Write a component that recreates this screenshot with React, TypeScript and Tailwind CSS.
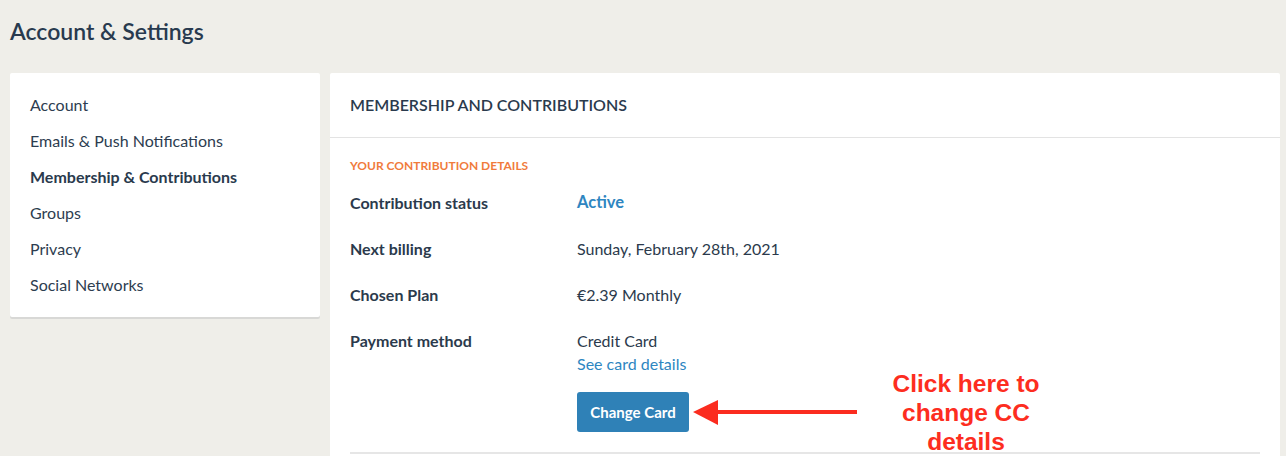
import React from "react";

const navItems = [
  { label: "Account", active: false },
  { label: "Emails & Push Notifications", active: false },
  { label: "Membership & Contributions", active: true },
  { label: "Groups", active: false },
  { label: "Privacy", active: false },
  { label: "Social Networks", active: false },
];

export default function App() {
  return (
    <div
      className="relative h-[456px] w-[1286px] overflow-hidden bg-[#efeee9] px-[10px] text-[#2b3a4c]"
      style={{ fontFamily: "Lato, 'Open Sans', sans-serif" }}
    >
      <div className="h-[73px] pt-[17px]">
        <h1 className="text-[23px] font-semibold leading-[28px] text-[#283a4f]">Account &amp; Settings</h1>
      </div>
      <div className="flex items-start gap-[10px]">
        <aside className="w-[310px] shrink-0 rounded-[2px] bg-white py-[14px] shadow-[0_2px_0_#d8d8d6]">
          {navItems.map((item) => (
            <div
              key={item.label}
              className={`h-[36px] px-[20px] text-[16px] leading-[36px] ${item.active ? "font-bold text-[#2a3a4d]" : "text-[#2d3d50]"}`}
            >
              {item.label}
            </div>
          ))}
        </aside>
        <main className="h-[400px] w-[950px] shrink-0 rounded-[2px] bg-white">
          <div className="flex h-[65px] items-center border-b border-[#e3e3e3] px-[20px]">
            <h2 className="text-[16px] font-semibold text-[#2a3a4d]">MEMBERSHIP AND CONTRIBUTIONS</h2>
          </div>
          <div className="px-[20px]">
            <div className="pt-[20px] text-[12px] font-bold leading-[16px] text-[#f07b3c]">YOUR CONTRIBUTION DETAILS</div>
            <div className="mt-[17px] flex h-[46px] items-start">
              <div className="w-[227px] text-[16px] font-bold leading-[24px]">Contribution status</div>
              <div className="text-[16.5px] font-bold leading-[22px] text-[#2e86c1]">Active</div>
            </div>
            <div className="flex h-[46px] items-start">
              <div className="w-[227px] text-[16px] font-bold leading-[24px]">Next billing</div>
              <div className="text-[16px] leading-[24px]">Sunday, February 28th, 2021</div>
            </div>
            <div className="flex h-[46px] items-start">
              <div className="w-[227px] text-[16px] font-bold leading-[24px]">Chosen Plan</div>
              <div className="text-[16px] leading-[24px]">€2.39 Monthly</div>
            </div>
            <div className="flex items-start">
              <div className="w-[227px] text-[16px] font-bold leading-[24px]">Payment method</div>
              <div className="flex flex-col items-start">
                <div className="text-[16px] leading-[23px]">Credit Card</div>
                <div className="text-[16px] leading-[23px] text-[#2e86c1]">See card details</div>
                <button className="mt-[17px] h-[40px] w-[112px] rounded-[3px] bg-[#2f81b7] text-[15px] font-bold text-white">
                  Change Card
                </button>
              </div>
            </div>
            <div className="mt-[20px] h-[2px] bg-[#e6e6e6]" />
          </div>
        </main>
      </div>

      <svg className="absolute left-[690px] top-[396px]" width="172" height="32" viewBox="0 0 172 32">
        <polygon points="3,16 28,4 28,29" fill="#fb2c1f" />
        <rect x="26" y="14" width="141" height="4" fill="#fb2c1f" />
      </svg>
      <div
        className="absolute left-[866px] top-[369px] w-[200px] text-center text-[24.5px] font-bold leading-[29px] text-[#fd2d20]"
        style={{ fontFamily: "'Liberation Sans', Arial, sans-serif" }}
      >
        Click here to
        <br />
        change CC
        <br />
        details
      </div>
    </div>
  );
}
